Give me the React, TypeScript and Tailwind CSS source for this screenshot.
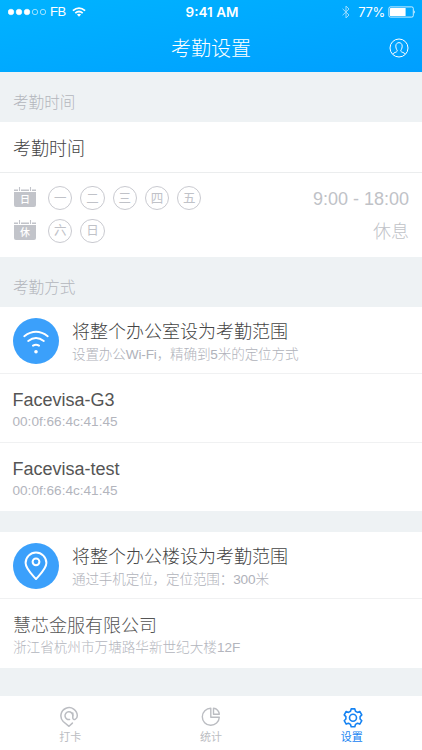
import type { ReactNode } from "react";
import clsx from "clsx";

const WORK_DAYS = ["一", "二", "三", "四", "五"];
const REST_DAYS = ["六", "日"];

const NETWORKS = [
  { name: "Facevisa-G3", mac: "00:0f:66:4c:41:45" },
  { name: "Facevisa-test", mac: "00:0f:66:4c:41:45" },
];

function WifiIcon() {
  return (
    <svg viewBox="0 0 46 46" className="size-[46px]" fill="none" stroke="#fff" strokeLinecap="round">
      <path d="M11.3 18.2Q23 9.4 34.7 18.2" strokeWidth="2" />
      <path d="M15.2 23Q23 17.2 30.8 23" strokeWidth="2" />
      <path d="M20 27.6Q23 25.8 26 27.6" strokeWidth="2" />
      <circle cx="23" cy="33.8" r="1.8" fill="#fff" stroke="none" />
    </svg>
  );
}

function PinIcon() {
  return (
    <svg viewBox="0 0 46 46" className="size-[46px]" fill="none" stroke="#fff" strokeWidth="2" strokeLinejoin="round">
      <path d="M23 36C18.5 31 12.6 25.6 12.6 20A10.4 10.4 0 0 1 33.4 20C33.4 25.6 27.5 31 23 36Z" />
      <circle cx="23" cy="18.8" r="3.4" />
    </svg>
  );
}

function AtPinIcon() {
  return (
    <svg viewBox="0 0 20 22" className="h-[22px] w-5 -translate-x-px" fill="none" stroke="currentColor" strokeWidth="1.5" strokeLinecap="round" strokeLinejoin="round">
      <path d="M13.8 7V12.2C14.2 14.6 18.3 13.6 18.3 9.8A8.2 8.2 0 1 0 4.2 15.5L10 20.3L13.4 17.1" />
      <path d="M13.8 9.7A3.9 3.9 0 1 0 10.6 13.5" />
    </svg>
  );
}

function PieIcon() {
  return (
    <svg viewBox="0 0 20 22" className="h-[22px] w-5" fill="none" stroke="currentColor" strokeWidth="1.4" strokeLinejoin="round">
      <path d="M9.8 2.3A8.5 8.5 0 1 0 18.3 11.2H9.8Z" />
      <path d="M12.5 2.3V8.3H18.3A6.1 6.1 0 0 0 12.5 2.3Z" />
    </svg>
  );
}

function GearIcon() {
  return (
    <svg viewBox="0 0 20 22" className="h-[22px] w-5 translate-x-px" fill="none" stroke="currentColor" strokeWidth="1.6" strokeLinejoin="round">
      <path d="M8.2 2.9H11.8L12.5 5.2L14.5 6.4L16.8 5.5L18.8 8.9L17.1 10.6V13L18.8 14.7L16.8 18.1L14.5 17.3L12.5 18.4L11.8 20.7H8.2L7.5 18.4L5.5 17.3L3.2 18.1L1.2 14.7L2.9 13V10.6L1.2 8.9L3.2 5.5L5.5 6.4L7.5 5.2Z" />
      <circle cx="10" cy="11.8" r="3.5" />
    </svg>
  );
}

function StatusBar() {
  return (
    <div className="flex h-6 items-center pr-[6px] pl-2 text-[13px] leading-6">
      <div className="flex w-[170px] items-center">
        <svg viewBox="0 0 40 8" className="h-2 w-10" fill="#fff" stroke="#fff" strokeWidth=".6">
          <circle cx="3" cy="4" r="2.8" />
          <circle cx="11" cy="4" r="2.8" />
          <circle cx="19" cy="4" r="2.8" />
          <circle cx="27" cy="4" r="2.7" fill="none" />
          <circle cx="35" cy="4" r="2.7" fill="none" />
        </svg>
        <span className="ml-[2px] w-[18px] text-[13px] tracking-[-0.4px]">FB</span>
        <svg viewBox="0 0 14 10" className="ml-1 h-[10px] w-[14px]" fill="none" stroke="#fff" strokeWidth="1.8">
          <path d="M.9 3.6Q7-1.4 13.1 3.6" />
          <path d="M3.3 6.1Q7 3 10.7 6.1" />
          <path d="M4.9 7.5Q7 5.9 9.1 7.5L7 9.8Z" fill="#fff" stroke="none" />
        </svg>
      </div>
      <span className="flex-1 text-center font-[Inter,sans-serif] text-[13.5px] font-semibold whitespace-nowrap">9:41 AM</span>
      <div className="flex w-[170px] items-center justify-end">
        <svg viewBox="0 0 8 14" className="mr-2 h-[14px] w-2 opacity-60" fill="none" stroke="#fff" strokeWidth="1">
          <path d="M.6 3.8L7 10L4 13V1L7 4L.6 10.2" />
        </svg>
        <span className="font-[Inter,sans-serif] text-[13px] tracking-[-0.3px]">77%</span>
        <svg viewBox="0 0 28 12" className="ml-[3px] h-3 w-7" fill="none" stroke="#fff" strokeWidth=".8">
          <rect x=".9" y=".9" width="24.4" height="10.2" rx="1.5" />
          <rect x="2" y="2" width="15.6" height="8" rx=".5" fill="#fff" stroke="none" />
          <path d="M26.2 4.2Q27.8 6 26.2 7.8Z" fill="#fff" stroke="none" />
        </svg>
      </div>
    </div>
  );
}

function CalendarBadge({ label }: { label: string }) {
  return (
    <div className="mb-[2px] flex w-[22px] flex-col">
      <svg viewBox="0 0 22 5" className="h-[5px] w-[22px]" fill="none" stroke="#c2c4ca">
        <path d="M0 3.2H4M7 3.2H15M18 3.2H22" strokeWidth="1.5" />
        <path d="M5.5 0V4M16.5 0V4" strokeWidth="1.1" />
      </svg>
      <div className="flex h-[15px] items-center justify-center rounded-b-[2px] bg-[#c2c4ca] pt-px text-[10px] leading-none font-medium text-white">
        {label}
      </div>
    </div>
  );
}

function DayRow({ badge, days, children }: { badge: string; days: string[]; children: ReactNode }) {
  return (
    <div className="flex h-[32.5px] items-center pr-[13px] pl-[14px] text-[#c0c2c8]">
      <CalendarBadge label={badge} />
      <div className="ml-3 flex gap-2">
        {days.map((day) => (
          <span
            key={day}
            className="flex size-[24.3px] items-center justify-center rounded-full border border-[#c9cad0] pt-[2px] text-[12.5px] leading-none"
          >
            {day}
          </span>
        ))}
      </div>
      <span className="ml-auto pt-[3px] text-[18px] font-light text-[#c0c2c7]">{children}</span>
    </div>
  );
}

function SectionLabel({ children }: { children: ReactNode }) {
  return (
    <div className="flex h-[50px] shrink-0 items-center bg-[#eef2f4] pt-[11px] pl-[13px] text-[15.6px] font-light text-[#b3b6bc]">
      {children}
    </div>
  );
}

function RangeRow({ icon, title, hint }: { icon: ReactNode; title: string; hint: string }) {
  return (
    <div className="flex h-[67px] items-center border-b border-[#f0f1f2] pt-px pl-[13px]">
      <div className="size-[46px] shrink-0 rounded-full bg-[#3ba0fb]">{icon}</div>
      <div className="ml-[13px] pt-[4px] whitespace-nowrap">
        <div className="text-[18px] leading-[24px] font-light text-[#444]">{title}</div>
        <div className="text-[13.6px] leading-[21px] font-light tracking-[-0.16px] text-[#b0b2ba]">{hint}</div>
      </div>
    </div>
  );
}

function InfoRow({ title, detail, className }: { title: string; detail: string; className?: string }) {
  return (
    <div className={clsx("flex flex-col justify-center whitespace-nowrap", className)}>
      <div className="text-[18px] leading-[23px] font-light text-[#555]">{title}</div>
      <div className="text-[13.6px] leading-[19px] font-light text-[#b3b5bd]">{detail}</div>
    </div>
  );
}

function TabItem({ icon, label, active }: { icon: ReactNode; label: string; active?: boolean }) {
  return (
    <div className={clsx("flex flex-1 flex-col items-center pt-[10px]", active ? "text-[#1683f2]" : "text-[#bbbdc2]")}>
      {icon}
      <span className="mt-px text-[11px] leading-[16px]">{label}</span>
    </div>
  );
}

export default function App() {
  return (
    <div className="flex h-[750px] w-[422px] flex-col overflow-hidden bg-white font-['Liberation_Sans','Noto_Sans_CJK_SC',sans-serif]">
      <header className="h-[72px] shrink-0 bg-linear-[170deg] from-[#00b3ff] to-[#009fff] text-white">
        <StatusBar />
        <div className="flex h-12 items-center pr-[13px] pl-[33px]">
          <h1 className="flex-1 pt-px text-center text-[20px] leading-[30px] font-light">考勤设置</h1>
          <svg viewBox="0 0 20 20" className="size-5" fill="none" stroke="#fff" strokeWidth="1">
            <circle cx="10" cy="10" r="9" />
            <path d="M3.7 16.2C4.5 14.5 7.8 14.3 8.2 13.2C8.6 12 6.8 11.4 6.8 8.1C6.8 3.5 13.2 3.5 13.2 8.1C13.2 11.4 11.4 12 11.8 13.2C12.2 14.3 15.5 14.5 16.3 16.2" />
          </svg>
        </div>
      </header>

      <SectionLabel>考勤时间</SectionLabel>
      <section className="h-[135px] shrink-0">
        <div className="flex h-[51px] items-center border-b border-[#ebedee] pt-[5px] pl-[13px] text-[18px] font-light text-[#444]">
          考勤时间
        </div>
        <div className="pt-[9px]">
          <DayRow badge="日" days={WORK_DAYS}>9:00 - 18:00</DayRow>
          <DayRow badge="休" days={REST_DAYS}>休息</DayRow>
        </div>
      </section>

      <SectionLabel>考勤方式</SectionLabel>
      <section className="h-[204px] shrink-0">
        <RangeRow icon={<WifiIcon />} title="将整个办公室设为考勤范围" hint="设置办公Wi-Fi，精确到5米的定位方式" />
        {NETWORKS.map((network, i) => (
          <InfoRow
            key={network.name}
            title={network.name}
            detail={network.mac}
            className={clsx("h-[68.5px] pt-1 pl-[12.5px]", i === 0 && "border-b border-[#f0f1f2]")}
          />
        ))}
      </section>

      <section className="h-[157px] shrink-0 border-t-[21px] border-[#eef2f4]">
        <RangeRow icon={<PinIcon />} title="将整个办公楼设为考勤范围" hint="通过手机定位，定位范围：300米" />
        <InfoRow title="慧芯金服有限公司" detail="浙江省杭州市万塘路华新世纪大楼12F" className="h-[69px] pt-[5px] pl-[13px]" />
      </section>

      <nav className="flex flex-1 border-t-[28px] border-[#eef2f4]">
        <TabItem icon={<AtPinIcon />} label="打卡" />
        <TabItem icon={<PieIcon />} label="统计" />
        <TabItem icon={<GearIcon />} label="设置" active />
      </nav>
    </div>
  );
}
